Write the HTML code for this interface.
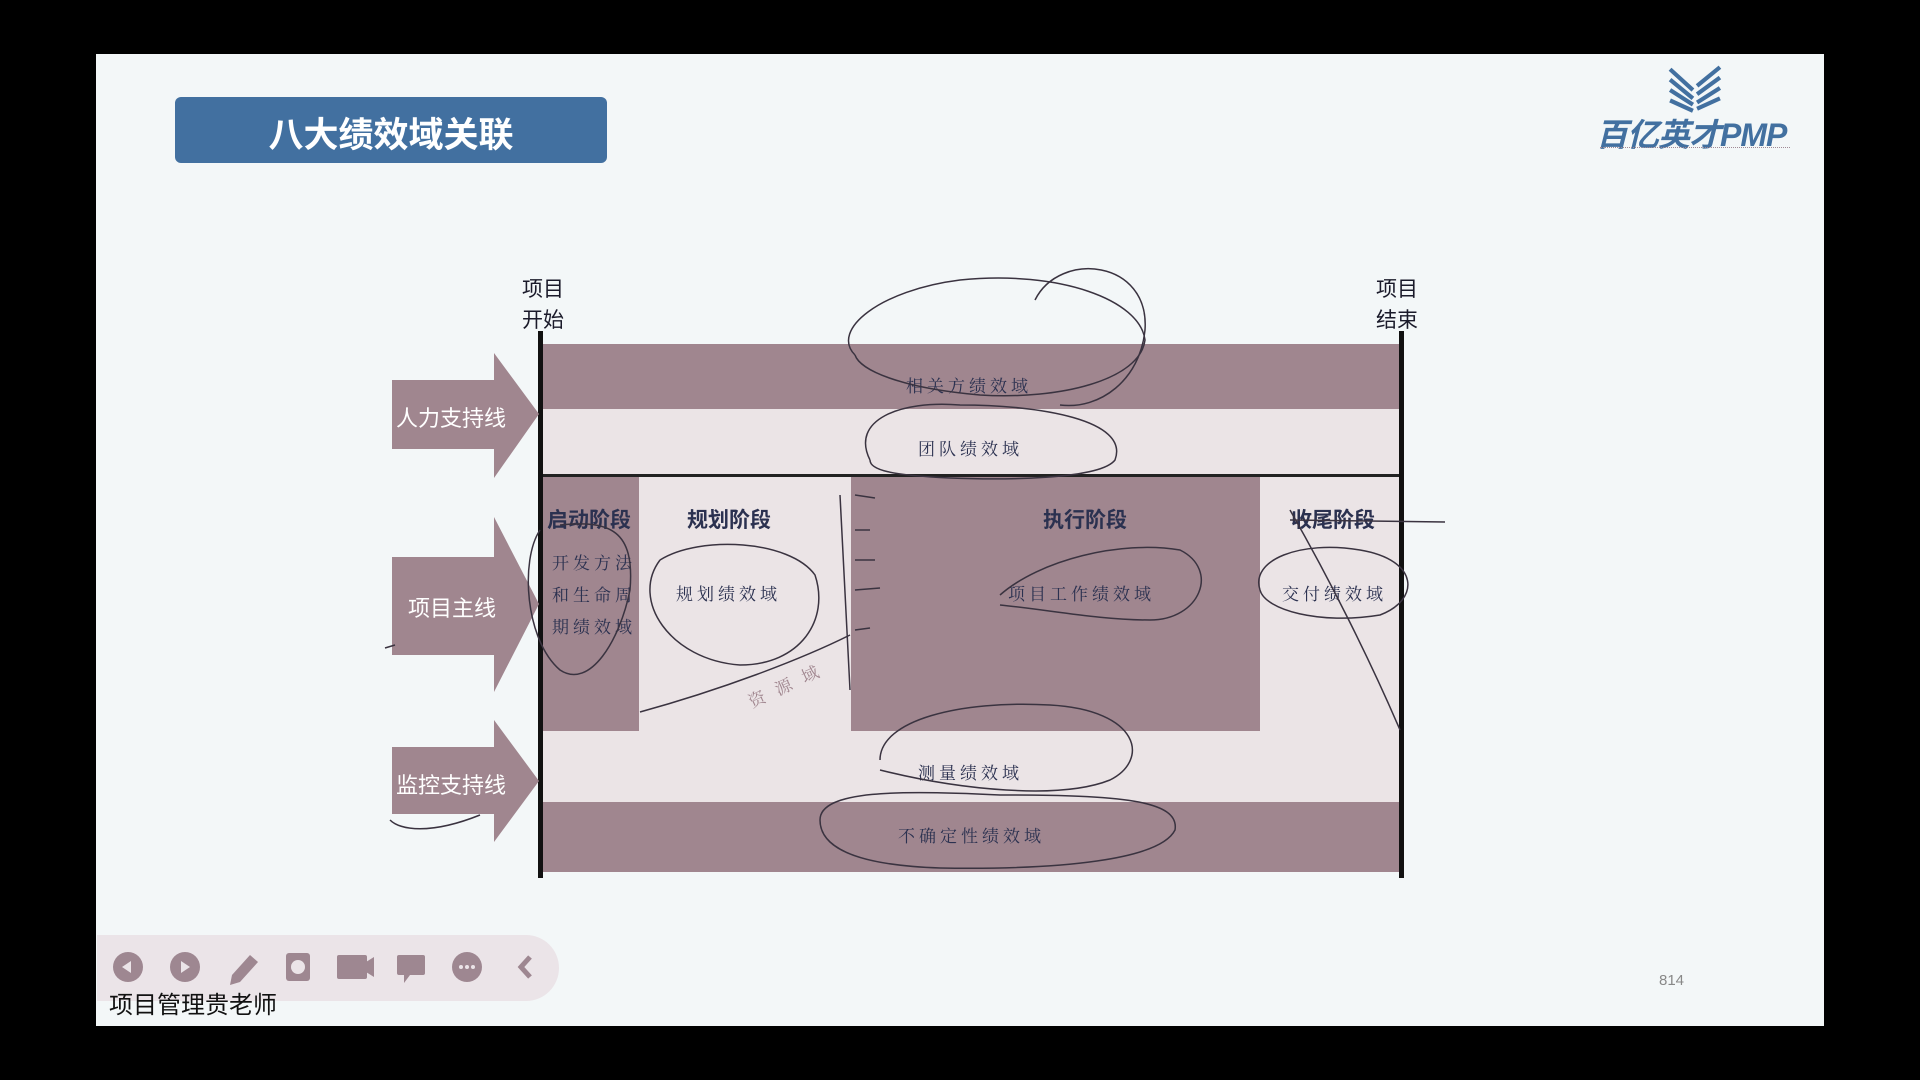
<!DOCTYPE html>
<html><head><meta charset="utf-8"><style>
html,body{margin:0;padding:0;width:1920px;height:1080px;background:#000;overflow:hidden}
.slide{position:absolute;left:96px;top:54px;width:1728px;height:972px;background:#f3f7f8}
.t{position:absolute;font-family:"Liberation Sans","Noto Sans CJK SC",sans-serif;white-space:nowrap}
.dm{position:absolute;font-family:"Liberation Serif","Noto Serif CJK SC",serif;font-size:17px;color:#2b3150;letter-spacing:4px;white-space:nowrap}
.ph{position:absolute;font-family:"Liberation Sans","Noto Sans CJK SC",sans-serif;font-size:21px;font-weight:bold;color:#2b3150;white-space:nowrap}
.al{position:absolute;font-family:"Liberation Sans","Noto Sans CJK SC",sans-serif;font-size:22px;color:#fff;white-space:nowrap}
</style></head><body>
<div class="slide"></div>
<div style="position:absolute;left:175px;top:97px;width:432px;height:66px;background:#4270a0;border-radius:6px"></div>
<div class="t" style="left:175px;top:107px;width:432px;text-align:center;font-size:35px;font-weight:bold;color:#fff">八大绩效域关联</div>

<svg style="position:absolute;left:1668px;top:64px" width="54" height="50" viewBox="0 0 52 46">
<g fill="none" stroke="#4270a0" stroke-width="4">
<path d="M2 4 L24 24 M2 14 L24 32 M2 24 L24 38 M2 34 L24 44"/>
<path d="M50 2 L28 20 M50 12 L28 28 M50 22 L28 36 M50 32 L28 42"/>
</g></svg>
<div class="t" style="left:1596px;top:110px;font-size:32px;font-weight:bold;font-style:italic;color:#4270a0;letter-spacing:-1px">百亿英才PMP</div>
<div style="position:absolute;left:1600px;top:147px;width:190px;border-top:1px dotted #a08a95"></div>

<div style="position:absolute;left:541px;top:344px;width:860px;height:65px;background:#a0868f"></div>
<div style="position:absolute;left:541px;top:409px;width:860px;height:67px;background:#ebe4e6"></div>
<div style="position:absolute;left:541px;top:474px;width:860px;height:3px;background:#222"></div>
<div style="position:absolute;left:541px;top:477px;width:98px;height:254px;background:#a0868f"></div>
<div style="position:absolute;left:639px;top:477px;width:212px;height:254px;background:#ebe4e6"></div>
<div style="position:absolute;left:851px;top:477px;width:409px;height:254px;background:#a0868f"></div>
<div style="position:absolute;left:1260px;top:477px;width:141px;height:254px;background:#ebe4e6"></div>
<div style="position:absolute;left:541px;top:731px;width:860px;height:71px;background:#ebe4e6"></div>
<div style="position:absolute;left:541px;top:802px;width:860px;height:70px;background:#a0868f"></div>
<div style="position:absolute;left:538px;top:331px;width:5px;height:547px;background:#111"></div>
<div style="position:absolute;left:1399px;top:331px;width:5px;height:547px;background:#111"></div>

<svg style="position:absolute;left:390px;top:350px" width="152" height="495" viewBox="390 350 152 495">
<g fill="#a0868f">
<polygon points="392,380 494,380 494,353 539,414 494,478 494,449 392,449"/>
<polygon points="392,557 494,557 494,517 539,604 494,692 494,655 392,655"/>
<polygon points="392,747 494,747 494,720 539,781 494,842 494,814 392,814"/>
</g></svg>
<div class="al" style="left:396px;top:401px">人力支持线</div>
<div class="al" style="left:408px;top:591px">项目主线</div>
<div class="al" style="left:396px;top:768px">监控支持线</div>

<div class="t" style="left:522px;top:274px;font-size:21px;color:#1a1a2a;line-height:31px">项目<br>开始</div>
<div class="t" style="left:1376px;top:274px;font-size:21px;color:#1a1a2a;line-height:31px">项目<br>结束</div>

<div class="ph" style="left:547px;top:504px">启动阶段</div>
<div class="ph" style="left:687px;top:504px">规划阶段</div>
<div class="ph" style="left:1043px;top:504px">执行阶段</div>
<div class="ph" style="left:1291px;top:504px">收尾阶段</div>

<div class="dm" style="left:906px;top:372px">相关方绩效域</div>
<div class="dm" style="left:918px;top:435px">团队绩效域</div>
<div class="dm" style="left:552px;top:548px;line-height:32px">开发方法<br>和生命周<br>期绩效域</div>
<div class="dm" style="left:676px;top:580px">规划绩效域</div>
<div class="dm" style="left:1008px;top:580px">项目工作绩效域</div>
<div class="dm" style="left:1282px;top:580px">交付绩效域</div>
<div class="dm" style="left:918px;top:759px">测量绩效域</div>
<div class="dm" style="left:898px;top:822px">不确定性绩效域</div>
<div class="dm" style="left:745px;top:672px;transform:rotate(-25deg);color:#a0868f">资 源 域</div>

<svg style="position:absolute;left:0;top:0" width="1920" height="1080">
<g fill="none" stroke="#3a3340" stroke-width="1.5">
<path d="M855 355 C830 330 880 290 960 280 C1060 270 1140 300 1145 340 C1140 380 1060 400 980 395 C900 388 860 370 855 355"/>
<path d="M1035 300 C1060 250 1150 260 1145 330 C1140 380 1100 410 1060 405"/>
<path d="M870 460 C850 420 900 400 960 405 C1040 405 1130 420 1115 460 C1100 480 1000 480 950 478 C890 475 870 470 870 460"/>
<path d="M540 530 C520 560 525 640 560 670 C590 690 620 640 630 590 C635 530 610 520 560 525"/>
<path d="M660 560 C630 600 670 660 740 665 C800 665 830 620 815 575 C790 540 700 535 660 560"/>
<path d="M640 712 C720 690 800 660 850 635"/>
<path d="M1000 595 C1040 560 1120 540 1180 550 C1220 570 1200 620 1150 620 C1100 620 1050 610 1000 605"/>
<path d="M1260 590 C1250 560 1300 540 1360 550 C1420 560 1420 600 1380 615 C1320 625 1265 610 1260 590"/>
<path d="M1290 510 C1330 580 1370 660 1400 730 M1290 520 L1445 522"/>
<path d="M880 760 C880 720 960 700 1050 705 C1140 710 1150 760 1110 780 C1060 800 960 790 880 770"/>
<path d="M820 820 C820 790 900 790 1000 795 C1120 795 1180 800 1175 830 C1160 860 1060 870 940 868 C850 865 820 845 820 820"/>
<path d="M840 495 L850 690 M855 495 L875 498 M855 530 L870 530 M855 560 L875 560 M855 590 L880 588 M855 630 L870 628"/>
<path d="M390 820 C400 830 430 835 480 815 M385 648 L395 645"/>
</g></svg>

<div style="position:absolute;left:97px;top:935px;width:462px;height:66px;background:#ebe4e8;border-radius:0 33px 33px 0"></div>
<svg style="position:absolute;left:97px;top:945px" width="460" height="45" viewBox="97 945 460 45">
<g fill="#9e8791">
<circle cx="128" cy="967" r="15"/><circle cx="185" cy="967" r="15"/>
<polygon points="230,985 232,975 250,955 258,962 240,982"/>
<rect x="286" y="953" width="24" height="28" rx="3"/><circle cx="298" cy="967" r="7" fill="#ebe4e8"/>
<rect x="337" y="955" width="30" height="24" rx="2"/><polygon points="366,962 374,957 374,977 366,972"/>
<rect x="397" y="955" width="28" height="20" rx="2"/><polygon points="404,975 410,975 404,983"/>
<circle cx="467" cy="967" r="15"/>
</g>
<g fill="#ebe4e8"><polygon points="122,967 131,961 131,973"/><polygon points="190,967 181,961 181,973"/>
<circle cx="461" cy="967" r="2"/><circle cx="467" cy="967" r="2"/><circle cx="473" cy="967" r="2"/></g>
<path d="M530 957 L521 967 L530 977" fill="none" stroke="#9e8791" stroke-width="5"/>
</svg>
<div class="t" style="left:109px;top:985px;font-size:24px;color:#111">项目管理贵老师</div>
<div class="t" style="left:1659px;top:972px;font-size:15px;color:#888">814</div>
</body></html>
